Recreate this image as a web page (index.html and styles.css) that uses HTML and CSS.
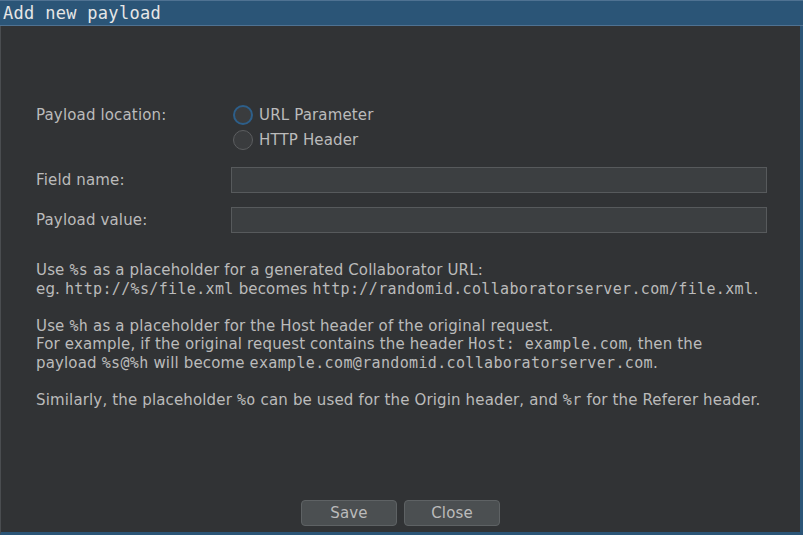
FILE: index.html
```html
<!DOCTYPE html>
<html>
<head>
<meta charset="utf-8">
<link rel="stylesheet" href="styles.css">
</head>
<body>
<div class="window">
  <div class="titlebar">Add new payload</div>
  <div class="content">
    <div class="form">
      <div class="label loc">Payload location:</div>
      <div class="radios">
        <label class="radio"><span class="circle focus"></span>URL Parameter</label>
        <label class="radio"><span class="circle"></span>HTTP Header</label>
      </div>
      <div class="label">Field name:</div>
      <div class="field"></div>
      <div class="label">Payload value:</div>
      <div class="field"></div>
    </div>
    <div class="help">
      <p>Use <code>%s</code> as a placeholder for a generated Collaborator URL:<br>
      eg. <code>http://%s/file.xml</code> becomes <code>http://randomid.collaboratorserver.com/file.xml</code>.</p>
      <p>Use <code>%h</code> as a placeholder for the Host header of the original request.<br>
      For example, if the original request contains the header <code>Host: example.com</code>, then the<br>
      payload <code>%s@%h</code> will become <code>example.com@randomid.collaboratorserver.com</code>.</p>
      <p>Similarly, the placeholder <code>%o</code> can be used for the Origin header, and <code>%r</code> for the Referer header.</p>
    </div>
    <div class="buttons">
      <button class="btn">Save</button>
      <button class="btn">Close</button>
    </div>
  </div>
</div>
</body>
</html>
```
FILE: styles.css
```css
html, body {
  margin: 0;
  padding: 0;
  background: #313335;
}
.window {
  width: 803px;
  height: 535px;
  box-sizing: border-box;
  display: flex;
  flex-direction: column;
  background: #313335;
  border-left: 1px solid #4a4d50;
  border-right: 3px solid #2b5577;
  border-bottom: 3px solid #2b5577;
  font-family: "DejaVu Sans", sans-serif;
  font-size: 15px;
  letter-spacing: 0.15px;
  color: #bbbbbb;
}
.titlebar {
  height: 26px;
  box-sizing: border-box;
  background: #2b5577;
  border-top: 1px solid #4f7292;
  border-bottom: 1px solid #4f7292;
  margin-left: -1px;
  margin-right: -3px;
  padding-left: 3px;
  font-family: "DejaVu Sans Mono", monospace;
  font-size: 17px;
  letter-spacing: 0.3px;
  line-height: 24px;
  color: #e6e6e6;
}
.content {
  flex: 1;
  display: flex;
  flex-direction: column;
  padding: 0 0 0 35px;
}
.form {
  display: grid;
  grid-template-columns: 195px 536px;
  row-gap: 14px;
  margin-top: 78px;
}
.label {
  display: flex;
  align-items: center;
}
.label.loc {
  align-items: flex-start;
  line-height: 22px;
}
.radios {
  display: flex;
  flex-direction: column;
  gap: 3px;
  margin-left: 2px;
  margin-bottom: 2px;
}
.radio {
  display: flex;
  align-items: center;
  gap: 6px;
  height: 22px;
}
.circle {
  width: 20px;
  height: 20px;
  border-radius: 50%;
  border: 1px solid #5c5e60;
  background: #3a3c3e;
  box-sizing: border-box;
  display: inline-block;
}
.circle.focus {
  border: 2px solid #2d5f8a;
}
.field {
  height: 26px;
  box-sizing: border-box;
  background: #3c3f41;
  border: 1px solid #575a5c;
}
.help {
  margin-top: 28px;
  line-height: 18.5px;
}
.help p {
  margin: 0 0 18.5px 0;
}
code {
  font-family: "DejaVu Sans Mono", monospace;
  font-size: 15px;
  letter-spacing: 0.35px;
}
.buttons {
  margin-top: auto;
  margin-bottom: 6px;
  display: flex;
  justify-content: center;
  gap: 7px;
  margin-left: -35px;
}
.btn {
  width: 96px;
  height: 26px;
  box-sizing: border-box;
  background: #4b4f51;
  border: 1px solid #5e6264;
  border-radius: 4px;
  color: #bbbbbb;
  font-family: "DejaVu Sans", sans-serif;
  font-size: 15px;
  letter-spacing: 0.15px;
  padding: 0;
}
```
